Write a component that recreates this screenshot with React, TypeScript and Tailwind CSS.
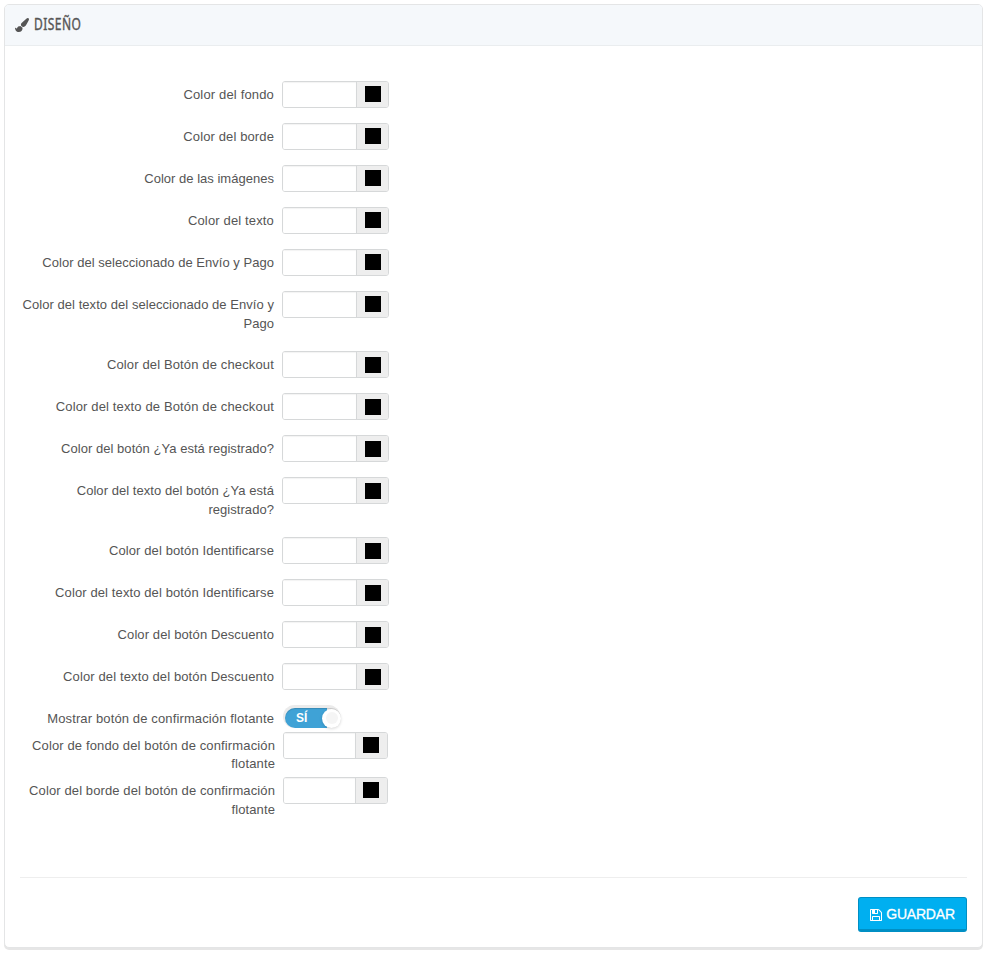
import React from 'react';

type Row = { lines: string[]; height: string; spacing: string; low?: boolean };

const rows: Row[] = [
  { lines: ['Color del fondo'], height: 'h-[42px]', spacing: 'tracking-[0.16px]' },
  { lines: ['Color del borde'], height: 'h-[42px]', spacing: 'tracking-[0.12px]' },
  { lines: ['Color de las imágenes'], height: 'h-[42px]', spacing: 'tracking-[0.02px]' },
  { lines: ['Color del texto'], height: 'h-[42px]', spacing: 'tracking-[0.15px]' },
  { lines: ['Color del seleccionado de Envío y Pago'], height: 'h-[42px]', spacing: 'tracking-[0.03px]' },
  { lines: ['Color del texto del seleccionado de Envío y', 'Pago'], height: 'h-[60px]', spacing: 'tracking-[0.05px]' },
  { lines: ['Color del Botón de checkout'], height: 'h-[42px]', spacing: 'tracking-[0.14px]', low: true },
  { lines: ['Color del texto de Botón de checkout'], height: 'h-[42px]', spacing: 'tracking-[0.14px]', low: true },
  { lines: ['Color del botón ¿Ya está registrado?'], height: 'h-[42px]', spacing: 'tracking-[0.04px]', low: true },
  { lines: ['Color del texto del botón ¿Ya está', 'registrado?'], height: 'h-[60px]', spacing: 'tracking-[0.05px]', low: true },
  { lines: ['Color del botón Identificarse'], height: 'h-[42px]', spacing: 'tracking-[0.11px]', low: true },
  { lines: ['Color del texto del botón Identificarse'], height: 'h-[42px]', spacing: 'tracking-[0.11px]', low: true },
  { lines: ['Color del botón Descuento'], height: 'h-[42px]', spacing: 'tracking-[0.1px]', low: true },
  { lines: ['Color del texto del botón Descuento'], height: 'h-[42px]', spacing: 'tracking-[0.12px]', low: true },
];

function Label({ lines, spacing, leading }: { lines: string[]; spacing: string; leading?: string }) {
  return (
    <label
      className={`${leading ? `w-[270px] pt-[5px] ${leading}` : 'w-[269px] pt-1 leading-[19px]'} ${spacing} shrink-0 text-right text-[13px] whitespace-nowrap text-[#555555]`}
    >
      {lines.map((line) => (
        <span key={line} className="block">
          {line}
        </span>
      ))}
    </label>
  );
}

function ColorField({ small, low }: { small?: boolean; low?: boolean }) {
  return (
    <div
      className={`${small ? 'w-[105px]' : 'w-[107px]'} ml-2 flex h-[27px] overflow-hidden rounded-[3px] border border-[#d6d8d9] bg-white`}
    >
      <input
        aria-label="Color"
        className="min-w-0 flex-1 bg-white shadow-[inset_0_1px_1px_rgba(0,0,0,0.05)] outline-none"
      />
      <div
        className={`${low ? 'pt-[5px]' : 'pt-1'} ${small ? 'pl-[7px]' : 'pl-2'} w-8 shrink-0 border-l border-[#d6d8d9] bg-[#eeeeee]`}
      >
        <span className="block size-4 bg-black" />
      </div>
    </div>
  );
}

export default function App() {
  return (
    <div className="h-[957px] w-[990px] bg-white pt-1 pl-1 font-['Liberation_Sans',Arial,sans-serif]">
      <section className="flex h-[944px] w-[979px] flex-col rounded-[5px] border border-[#e4e5e6] bg-white shadow-[0_2px_0_#e6e6e6]">
        <header className="flex h-[41px] shrink-0 items-center rounded-t-[4px] border-b border-[#eaedef] bg-[#f5f8fb] pl-[10px] text-[#555555]">
          <svg viewBox="0 0 1792 1792" className="size-[14px]" fill="currentColor">
            <path d="M1615 0q70 0 122.5 46.5t52.5 116.5q0 63-45 151-332 629-465 752-97 91-218 91-126 0-216.5-92.5t-90.5-219.5q0-128 92-212l638-579q59-54 130-54zm-909 1034q39 76 106.5 130t150.5 76l1 71q4 213-129.5 347t-348.5 134q-123 0-218-46.5t-152.5-127.5-86.5-183-29-220q7 5 41 30t62 44.5 59 36.5 46 17q41 0 55-37 25-66 57.5-112.5t69.5-76 88-47.5 103-25.5 125-10.5z" />
          </svg>
          <h3 className="mb-[2px] ml-[5px] origin-left scale-x-[0.75] font-['Noto_Sans',sans-serif] text-[16px] leading-[20px] font-normal tracking-[0.6px] [-webkit-text-stroke:0.4px_#555555]">
            DISEÑO
          </h3>
        </header>

        <form className="flex flex-1 flex-col pt-[35px]">
          {rows.map((row) => (
            <div key={row.lines[0]} className={`flex shrink-0 ${row.height}`}>
              <Label lines={row.lines} spacing={row.spacing} />
              <ColorField low={row.low} />
            </div>
          ))}
          <div className="flex h-[27px] shrink-0">
            <Label spacing="tracking-[0.13px]" lines={['Mostrar botón de confirmación flotante']} />
            <div className="ml-[9px] h-[23px] w-[57px] rounded-full bg-[#ebebeb] pt-[3px] pl-[2px]">
              <div className="flex h-5 w-[56px] items-center rounded-full bg-linear-to-r from-[#3fa2d6] from-75% to-[#ededed] to-75% pl-[11px] shadow-[inset_0_1px_1px_rgba(0,0,0,0.15)]">
                <span className="w-[26px] text-[12px] leading-none font-bold text-white">SÍ</span>
                <span className="flex size-[19px] shrink-0 items-center justify-center rounded-full bg-white shadow-[0_1px_3px_rgba(0,0,0,0.15)]">
                  <span className="size-[12px] rounded-full bg-[#f5f5f5]" />
                </span>
              </div>
            </div>
          </div>
          <div className="flex h-[45px] shrink-0">
            <Label leading="leading-[18px]" spacing="tracking-[0.13px]" lines={['Color de fondo del botón de confirmación', 'flotante']} />
            <ColorField small />
          </div>
          <div className="flex h-[45px] shrink-0">
            <Label leading="leading-[18.5px]" spacing="tracking-[0.11px]" lines={['Color del borde del botón de confirmación', 'flotante']} />
            <ColorField small />
          </div>

          <footer className="mx-[15px] mt-auto flex h-[70px] shrink-0 justify-end border-t border-[#eeeeee] pt-[19px]">
            <button
              type="button"
              className="flex h-[35px] w-[109px] items-center justify-center rounded-[3px] border border-b-[3px] border-[#008fc4] bg-[#00aff0] pt-[2px] text-[14px] tracking-[-0.2px] text-white [-webkit-text-stroke:0.3px_white]"
            >
              <svg viewBox="0 128 1536 1536" className="mr-[4px] size-3" fill="currentColor">
                <path d="M384 1536h768v-384h-768v384zm896 0h128v-896q0-14-10-38.5t-20-34.5l-281-281q-10-10-34-20t-39-10v416q0 40-28 68t-68 28h-576q-40 0-68-28t-28-68v-416h-128v1280h128v-416q0-40 28-68t68-28h832q40 0 68 28t28 68v416zm-384-928v-320q0-13-9.5-22.5t-22.5-9.5h-192q-13 0-22.5 9.5t-9.5 22.5v320q0 13 9.5 22.5t22.5 9.5h192q13 0 22.5-9.5t9.5-22.5zm640 32v928q0 40-28 68t-68 28h-1344q-40 0-68-28t-28-68v-1344q0-40 28-68t68-28h928q40 0 88 20t76 48l280 280q28 28 48 76t20 88z" />
              </svg>
              GUARDAR
            </button>
          </footer>
        </form>
      </section>
    </div>
  );
}
